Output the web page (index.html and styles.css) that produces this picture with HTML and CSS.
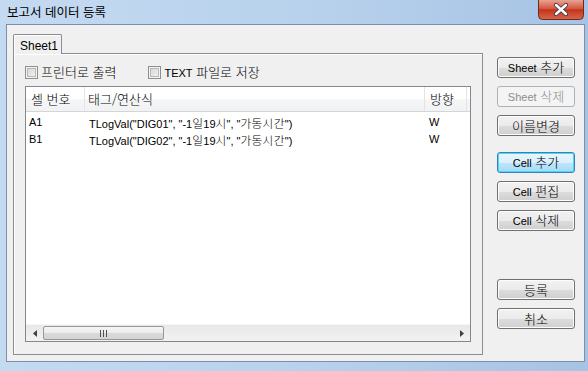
FILE: index.html
```html
<!DOCTYPE html>
<html lang="ko">
<head>
<meta charset="utf-8">
<title>보고서 데이터 등록</title>
<link rel="stylesheet" href="styles.css">
</head>
<body>
<div class="titlebar">
  <span class="title">보고서 데이터 등록</span>
  <div class="close">
    <svg width="46" height="20" viewBox="0 0 46 20">
      <defs>
        <linearGradient id="cg" x1="0" y1="0" x2="0" y2="1">
          <stop offset="0" stop-color="#e8a493"/>
          <stop offset="0.45" stop-color="#d4553c"/>
          <stop offset="0.5" stop-color="#c2341c"/>
          <stop offset="1" stop-color="#d9664a"/>
        </linearGradient>
      </defs>
      <path d="M0.5 0 V15.5 Q0.5 19.5 4.5 19.5 H41.5 Q45.5 19.5 45.5 15.5 V0" fill="url(#cg)" stroke="#6b2a22"/>
      <path d="M18 5 L28 14 M28 5 L18 14" stroke="#3b3b4a" stroke-width="4.2" stroke-linecap="round"/>
      <path d="M18 5 L28 14 M28 5 L18 14" stroke="#ffffff" stroke-width="2.4" stroke-linecap="round"/>
    </svg>
  </div>
</div>
<div class="client">
  <div class="tabctl">
    <div class="tabstrip"><div class="tab"><span class="en">Sheet1</span></div></div>
    <div class="panel">
      <div class="options">
        <label class="chk"><span class="box"></span><span class="lbl">프린터로 출력</span></label>
        <label class="chk"><span class="box"></span><span class="lbl"><span class="en">TEXT</span> 파일로 저장</span></label>
      </div>
      <div class="listview">
        <div class="lv-head">
          <div class="hc c1">셀 번호</div>
          <div class="hc c2">태그/연산식</div>
          <div class="hc c3">방향</div>
          <div class="hc c4"></div>
        </div>
        <div class="lv-body">
          <div class="row"><div class="cell c1 en">A1</div><div class="cell c2"><span class="en">TLogVal("DIG01", "-1</span>일<span class="en">19</span>시<span class="en">", "</span>가동시간<span class="en">")</span></div><div class="cell c3 en">W</div></div>
          <div class="row"><div class="cell c1 en">B1</div><div class="cell c2"><span class="en">TLogVal("DIG02", "-1</span>일<span class="en">19</span>시<span class="en">", "</span>가동시간<span class="en">")</span></div><div class="cell c3 en">W</div></div>
        </div>
        <div class="hscroll">
          <div class="arrow left"><svg width="4" height="7" viewBox="0 0 4 7"><path d="M4 0 V7 L0 3.5 Z" fill="#404040"/></svg></div>
          <div class="track">
            <div class="thumb"><svg width="7" height="7" viewBox="0 0 7 7"><path d="M0.5 0 V7 M3.5 0 V7 M6.5 0 V7" stroke="#505050"/></svg></div>
          </div>
          <div class="arrow right"><svg width="4" height="7" viewBox="0 0 4 7"><path d="M0 0 V7 L4 3.5 Z" fill="#404040"/></svg></div>
        </div>
      </div>
    </div>
  </div>
  <div class="buttons">
    <button class="btn"><span class="en">Sheet</span> 추가</button>
    <button class="btn disabled"><span class="en">Sheet</span> 삭제</button>
    <button class="btn">이름변경</button>
    <button class="btn focus gap1"><span class="en">Cell</span> 추가</button>
    <button class="btn"><span class="en">Cell</span> 편집</button>
    <button class="btn"><span class="en">Cell</span> 삭제</button>
    <button class="btn gap2">등록</button>
    <button class="btn">취소</button>
  </div>
</div>
</body>
</html>
```
FILE: styles.css
```css
* { box-sizing: border-box; }
html, body { margin: 0; padding: 0; }
body {
  width: 588px;
  height: 371px;
  overflow: hidden;
  font-family: "Noto Sans CJK KR", sans-serif;
  font-size: 13px;
  font-weight: 300;
  color: #000;
  background: linear-gradient(to right, #c4daf1 0%, #b7d1ec 55%, #a7c3e4 100%);
}
.en {
  font-family: "Liberation Sans", Arial, sans-serif;
  font-size: 11px;
  font-weight: 400;
}
.titlebar {
  height: 24px;
  display: flex;
  justify-content: space-between;
  align-items: flex-start;
  padding-left: 7px;
}
.title { line-height: 24px; font-size: 12.5px; font-weight: 400; color: #000; }
.close { width: 46px; height: 20px; margin-right: 4px; }
.close svg { display: block; }

.client {
  margin-left: 6px;
  width: 579px;
  height: 338px;
  border: 1px solid #7d8ea8;
  background: #f0f0f0;
  display: flex;
  align-items: flex-start;
  padding: 9px 0 0 6px;
}
.tabctl { width: 470px; display: flex; flex-direction: column; }
.tabstrip { display: flex; height: 19px; }
.tab {
  width: 49px;
  height: 20px;
  border: 1px solid #898c95;
  border-bottom: none;
  border-radius: 2px 2px 0 0;
  background: #f0f0f0;
  box-shadow: inset 1px 1px 0 #fff;
  padding-left: 6px;
  line-height: 19px;
  position: relative;
  z-index: 1;
}
.tab .en { font-size: 12px; }
.panel {
  height: 302px;
  border: 1px solid #898c95;
  background: #f0f0f0;
  box-shadow: inset 1px 1px 0 #fff;
  padding: 0 10px 0 11px;
  display: flex;
  flex-direction: column;
}
.options {
  height: 32px;
  display: flex;
  align-items: center;
  padding-top: 4px;
  line-height: 14px;
}
.chk { display: flex; align-items: center; line-height: 14px; white-space: nowrap; }
.chk + .chk { margin-left: 32px; }
.box {
  width: 13px;
  height: 13px;
  border: 1px solid #8e8f8f;
  margin-right: 3px;
  display: inline-block;
  box-shadow: inset 0 0 0 1px #f4f4f4, inset 0 0 0 2px #b8b8b8;
  background: linear-gradient(135deg, #d2d2d2, #f6f6f6);
}
.listview {
  width: 446px;
  height: 256px;
  border: 1px solid #828790;
  background: #fff;
  display: flex;
  flex-direction: column;
}
.lv-head {
  height: 25px;
  display: flex;
  background: linear-gradient(to bottom, #ffffff 0%, #ffffff 50%, #f5f6f7 51%, #f1f2f4 100%);
  border-bottom: 1px solid #d5d5d5;
}
.hc {
  line-height: 24px;
  border-right: 1px solid #e3e4e6;
  white-space: nowrap;
}
.c1 { width: 59px; padding-left: 5px; }
.c2 { width: 340px; padding-left: 3px; }
.c3 { width: 42px; padding-left: 5px; }
.hc.c4 { flex: 1; border-right: none; }
.lv-body { flex: 1; padding-top: 2px; }
.row { display: flex; height: 17px; line-height: 17px; }
.cell { white-space: nowrap; }
.row .c1 { padding-left: 3px; }
.row .c2 { padding-left: 4px; font-size: 11.7px; letter-spacing: 0.3px; }
.row .c2 .en { letter-spacing: 0; }
.row .c3 { padding-left: 4px; }
.hscroll {
  height: 17px;
  display: flex;
  background: linear-gradient(to bottom, #e8e8e8, #f2f2f2);
  border-top: 1px solid #f6f6f6;
}
.arrow { width: 17px; display: flex; align-items: center; justify-content: center; }
.track { flex: 1; display: flex; align-items: stretch; padding: 1px 0; }
.thumb {
  width: 121px;
  border: 1px solid #979797;
  border-radius: 2px;
  background: linear-gradient(to bottom, #f5f5f5 0%, #ececec 50%, #dadada 51%, #d3d3d3 100%);
  display: flex;
  align-items: center;
  justify-content: center;
}
.buttons {
  margin-left: 14px;
  margin-top: 23px;
  display: flex;
  flex-direction: column;
  width: 78px;
}
.btn {
  width: 78px;
  height: 21px;
  margin-bottom: 8px;
  font-family: "Noto Sans CJK KR", sans-serif;
  font-size: 13px;
  font-weight: 300;
  color: #000;
  border: 1px solid #707070;
  border-radius: 3px;
  background: linear-gradient(to bottom, #f2f2f2 0%, #ebebeb 50%, #dddddd 51%, #cfcfcf 100%);
  box-shadow: inset 0 0 0 1px #fcfcfc;
  padding: 0;
  line-height: 18px;
  white-space: nowrap;
}
.btn.disabled {
  color: #8d8d8d;
  border-color: #adb2b5;
  background: #f4f4f4;
  box-shadow: none;
}
.btn.focus {
  border-color: #3c7fb1;
  box-shadow: inset 0 0 0 1px #48d8fb;
  background: linear-gradient(to bottom, #eaf6fd 0%, #d9f0fc 50%, #bee6fd 51%, #a7d9f5 100%);
}
.gap1 { margin-top: 8px; }
.gap2 { margin-top: 40px; }
```
